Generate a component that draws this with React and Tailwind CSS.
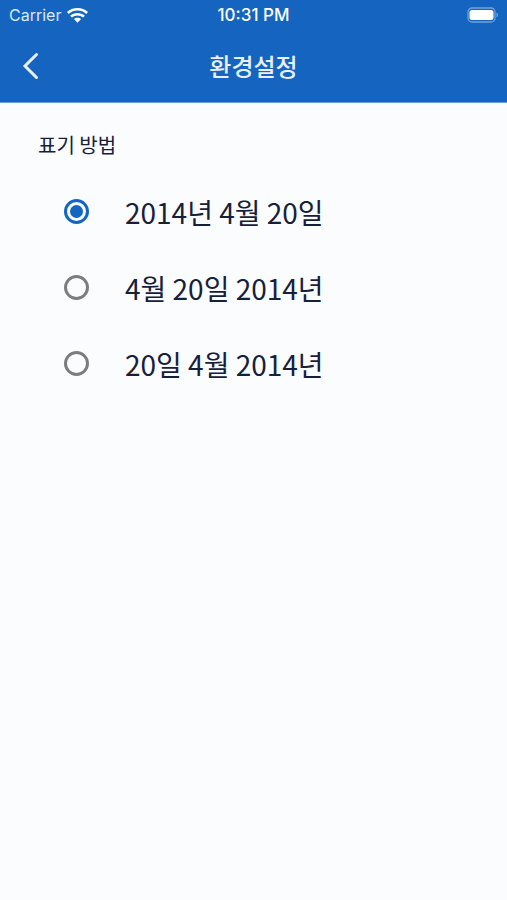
import React, { useState } from "react";

const formats = [
  { id: "ymd", label: "2014년 4월 20일" },
  { id: "mdy", label: "4월 20일 2014년" },
  { id: "dmy", label: "20일 4월 2014년" },
];

function StatusBar() {
  return (
    <div className="grid h-[30px] grid-cols-3 items-center px-[9px] font-['Inter',sans-serif] text-[16px] leading-[18px] text-white">
      <div className="flex items-center gap-[6px] text-[#dce9f8]">
        <span>Carrier</span>
        <svg className="h-[15px] w-[21px]" viewBox="0 0 20 15" preserveAspectRatio="none" fill="#fff" aria-hidden="true">
          <path d="M10 0C6.100 0 2.600 1.500 0 4l1.700 1.900C3.900 3.800 6.800 2.600 10 2.600s6.100 1.200 8.300 3.300L20 4C17.400 1.500 13.900 0 10 0z" />
          <path d="M10 5c-2.700 0-5.100 1-7 2.700l1.700 1.900C6.100 8.300 8 7.600 10 7.600s3.900.7 5.300 2L17 7.700C15.100 6 12.700 5 10 5z" />
          <path d="M10 9.800c-1.300 0-2.500.5-3.400 1.300L10 14.700l3.400-3.600c-.9-.8-2.100-1.300-3.400-1.300z" />
        </svg>
      </div>
      <span className="text-center text-[17px] font-medium">10:31 PM</span>
      <div className="flex justify-end">
        <svg className="h-[16px] w-[32px]" viewBox="0 0 32 16" aria-hidden="true">
          <rect x="2" y="1" width="27" height="14" rx="4" fill="none" stroke="#6fa2dc" strokeWidth="1.300" />
          <rect x="3.500" y="3" width="24" height="10" rx="2.500" fill="#fff" />
          <path d="M30.500 5.500v5c2-1 2-4 0-5z" fill="#6fa2dc" />
        </svg>
      </div>
    </div>
  );
}

export default function App() {
  const [selected, setSelected] = useState("ymd");
  return (
    <div className="min-h-screen bg-[#fafcfe] font-['Noto_Sans_CJK_KR',sans-serif] text-[#17203a]">
      <header className="border-b border-[#6b9fd9] bg-[#1565c0]">
        <StatusBar />
        <div className="grid h-[72px] grid-cols-[60px_1fr_60px] items-center">
          <button type="button" aria-label="뒤로" className="flex h-full items-center pl-[22px]">
            <svg className="h-[28px] w-[18px]" viewBox="0 0 18 28" fill="none" stroke="#e8f1fb" strokeWidth="3" strokeLinecap="round" aria-hidden="true">
              <path d="M14.500 2.500L3 14l11.500 11.500" />
            </svg>
          </button>
          <h1 className="text-center text-[24px] leading-[36px] font-medium text-[#e8f1fb]">환경설정</h1>
        </div>
      </header>
      <main>
        <fieldset>
          <legend className="px-[38px] pt-[28px] text-[20px] leading-[28px]">표기 방법</legend>
          <div className="pt-[14px]">
            {formats.map(({ id, label }) => (
              <label key={id} className="flex h-[76px] items-center gap-[36px] px-[64px]">
                <input
                  type="radio"
                  name="date-format"
                  checked={selected === id}
                  onChange={() => setSelected(id)}
                  className="size-[25px] shrink-0 appearance-none rounded-full border-3 border-[#7d7d80] checked:border-[#1565c0] checked:bg-[#1565c0] checked:bg-clip-content checked:p-[3px]"
                />
                <span className="pt-[2px] text-[28px] leading-[40px]">{label}</span>
              </label>
            ))}
          </div>
        </fieldset>
      </main>
    </div>
  );
}
